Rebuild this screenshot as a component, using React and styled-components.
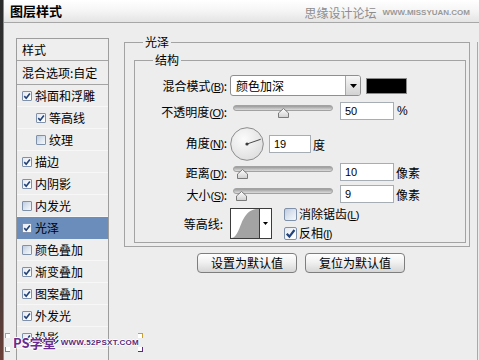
import React from "react";
import styled, { createGlobalStyle } from "styled-components";

const GlobalStyle = createGlobalStyle`
  html, body {
    margin: 0;
    padding: 0;
  }
  body {
    width: 479px;
    height: 360px;
    overflow: hidden;
    background: #ededed;
    font-family: "Noto Sans CJK SC", "Liberation Sans", sans-serif;
    font-size: 12px;
    color: #000;
  }
`;

const Screen = styled.div`
  position: relative;
  display: flex;
  width: 479px;
  height: 360px;
  overflow: hidden;
`;

const DesktopEdge = styled.div`
  flex: none;
  width: 4px;
  background: linear-gradient(
    to bottom,
    #2c2c2c 0%,
    #3a3a3a 55%,
    #4b3b37 82%,
    #6b3f37 100%
  );
  box-shadow: inset -1px 0 0 #8a8a8a;
`;

const Dialog = styled.div`
  flex: 1;
  display: flex;
  flex-direction: column;
  min-width: 0;
  background: #ededed;
`;

const TitleBar = styled.div`
  flex: none;
  display: flex;
  align-items: center;
  height: 22px;
  padding: 0 9px 0 6px;
  border-bottom: 1px solid #a7a7a7;
  background: linear-gradient(to bottom, #ffffff 0%, #f6f6f6 45%, #e4e4e4 100%);
`;

const Title = styled.span`
  font-size: 13px;
  font-weight: 700;
  line-height: 22px;
`;

const SiteMark = styled.div`
  margin-left: auto;
  display: flex;
  align-items: center;
  gap: 6px;
  padding-top: 3px;
  color: #8d8d8d;
`;

const SiteName = styled.span`
  font-size: 12px;
`;

const SiteUrl = styled.span`
  font-family: "Liberation Sans", sans-serif;
  font-size: 8px;
  font-weight: 700;
  letter-spacing: 0;
  color: #999;
`;

const Body = styled.div`
  flex: 1;
  display: flex;
  min-height: 0;
  padding: 12px 0 0 12px;
`;

const StylePanel = styled.div`
  flex: none;
  width: 93px;
  margin-top: 3px;
  box-sizing: border-box;
  border: 1px solid #9d9d9d;
  border-bottom: none;
  background: #eeeeee;
`;

const PanelHead = styled.div`
  height: ${(p) => p.$h}px;
  line-height: ${(p) => p.$h}px;
  padding-left: 5px;
  border-bottom: 1px solid #a4a4a4;
  white-space: nowrap;
`;

const StyleRow = styled.div`
  display: flex;
  align-items: center;
  gap: 3px;
  height: 21px;
  padding-left: ${(p) => (p.$indent ? 19 : 5)}px;
  border-bottom: 1px solid ${(p) => (p.$active ? "#6a8dbb" : "#f7f7f7")};
  background: ${(p) => (p.$active ? "#6a8dbb" : "transparent")};
  white-space: nowrap;
`;

const Box = styled.span`
  flex: none;
  display: inline-flex;
  align-items: center;
  justify-content: center;
  width: ${(p) => p.$size}px;
  height: ${(p) => p.$size}px;
  box-sizing: border-box;
  border: 1px solid #7f91aa;
  border-radius: ${(p) => (p.$size > 11 ? 2 : 1)}px;
  background: ${(p) =>
    p.$checked
      ? "linear-gradient(135deg, #e4e8ee 0%, #f7f8fa 60%, #ffffff 100%)"
      : "linear-gradient(135deg, #bfcde0 0%, #e2e9f2 60%, #f6f8fb 100%)"};
`;

function CheckBox({ checked, size = 10 }) {
  return (
    <Box $size={size} $checked={checked}>
      {checked && (
        <svg width={size - 2} height={size - 2} viewBox="0 0 10 10">
          <path
            d="M1.6 5.2 L4 7.8 L8.6 1.8"
            fill="none"
            stroke="#21427c"
            strokeWidth="2"
          />
        </svg>
      )}
    </Box>
  );
}

const RightArea = styled.div`
  flex: 1;
  display: flex;
  flex-direction: column;
  padding: 0 0 0 15px;
`;

const Rail = styled.div`
  flex: none;
  width: 1px;
  margin: 7px 0 0 0;
  border-left: 1px solid #a9a9a9;
`;

const Group = styled.fieldset`
  margin: 0;
  min-inline-size: 0;
  box-sizing: border-box;
  width: ${(p) => (p.$w ? `${p.$w}px` : "auto")};
  padding: ${(p) => p.$pad};
  border: 1px solid #a3a3a3;
`;

const GroupTitle = styled.legend`
  margin-left: ${(p) => p.$x}px;
  padding: 0 2px;
  font-size: 12px;
  line-height: 14px;
`;

const FormRow = styled.div`
  display: flex;
  align-items: center;
  height: ${(p) => p.$h}px;
  margin-top: ${(p) => p.$gap || 0}px;
`;

const FieldLabel = styled.div`
  flex: none;
  width: 92px;
  box-sizing: border-box;
  padding-right: ${(p) => p.$inset || 0}px;
  margin-bottom: ${(p) => p.$lift || 0}px;
  text-align: right;
  white-space: nowrap;
`;

const Key = styled.span`
  font-family: "Liberation Sans", sans-serif;
  font-size: 11px;
  letter-spacing: -0.5px;
  u {
    text-decoration-thickness: 1px;
    text-underline-offset: 1px;
  }
`;

const Select = styled.div`
  flex: none;
  display: flex;
  width: 131px;
  height: 21px;
  margin-left: 3px;
  box-sizing: border-box;
  border: 1px solid #8f8f8f;
  border-radius: 3px;
  background: #fff;
  overflow: hidden;
`;

const SelectText = styled.span`
  flex: 1;
  padding-left: 5px;
  line-height: 19px;
`;

const SelectArrow = styled.span`
  flex: none;
  display: flex;
  align-items: center;
  justify-content: center;
  width: 14px;
  border-left: 1px solid #a8a8a8;
  background: linear-gradient(to bottom, #f7f7f7 0%, #d2d2d2 100%);
`;

const Swatch = styled.div`
  flex: none;
  width: 41px;
  height: 16px;
  margin-left: 5px;
  box-sizing: border-box;
  border: 1px solid #8a8a8a;
  background: #000;
`;

const SliderWrap = styled.div`
  position: relative;
  flex: none;
  width: 100px;
  height: 16px;
  margin-left: 6px;
`;

const Track = styled.div`
  position: absolute;
  left: 0;
  right: 0;
  top: 2px;
  height: 4px;
  border-radius: 3px;
  border: 1px solid #a2a2a2;
  background: linear-gradient(to bottom, #9b9b9b 0%, #dcdcdc 100%);
`;

const Thumb = styled.svg`
  position: absolute;
  top: 5px;
`;

function Slider({ value, max }) {
  const left = Math.round((value / max) * 89);
  return (
    <SliderWrap>
      <Track />
      <Thumb width="11" height="10" viewBox="0 0 11 10" style={{ left }}>
        <defs>
          <linearGradient id="thumbFill" x1="0" y1="0" x2="0" y2="1">
            <stop offset="0" stopColor="#ffffff" />
            <stop offset="1" stopColor="#cfcfcf" />
          </linearGradient>
        </defs>
        <path
          d="M5.5 0.5 L10.5 5 L10.5 9.5 L0.5 9.5 L0.5 5 Z"
          fill="url(#thumbFill)"
          stroke="#7a7a7a"
        />
      </Thumb>
    </SliderWrap>
  );
}

const NumberBox = styled.div`
  flex: none;
  width: ${(p) => p.$w}px;
  height: 18px;
  margin-left: ${(p) => p.$gap}px;
  box-sizing: border-box;
  padding-left: 4px;
  border: 1px solid #a7adb4;
  background: #fff;
  font-family: "Liberation Sans", sans-serif;
  font-size: 11px;
  line-height: 16px;
`;

const Unit = styled.span`
  flex: none;
  margin-left: ${(p) => p.$gap}px;
  font-family: ${(p) =>
    p.$latin ? '"Liberation Sans", sans-serif' : "inherit"};
`;

const Dial = styled.svg`
  flex: none;
  margin-left: 3px;
`;

const ContourBox = styled.div`
  flex: none;
  display: flex;
  width: 42px;
  height: 31px;
  margin-left: 3px;
  box-sizing: border-box;
  border: 1px solid #3c3c3c;
  background: #fff;
`;

const ContourGraph = styled.svg`
  flex: none;
  border-right: 1px solid #3c3c3c;
`;

const ContourArrow = styled.span`
  flex: 1;
  display: flex;
  align-items: center;
  justify-content: center;
`;

const OptionStack = styled.div`
  display: flex;
  flex-direction: column;
  gap: 6px;
  margin-left: 12px;
`;

const Option = styled.label`
  display: flex;
  align-items: center;
  gap: 2px;
  height: 13px;
  line-height: 13px;
  white-space: nowrap;
`;

const ButtonRow = styled.div`
  display: flex;
  gap: 8px;
  margin-top: 6px;
  padding-left: 73px;
`;

const Button = styled.button`
  width: 100px;
  height: 20px;
  padding: 0;
  border: 1px solid #7e7e7e;
  border-radius: 4px;
  background: linear-gradient(to bottom, #ffffff 0%, #f1f1f1 45%, #d6d6d6 100%);
  font-family: inherit;
  font-size: 12px;
  line-height: 18px;
  color: #000;
`;

const Watermark = styled.div`
  position: absolute;
  left: 5px;
  top: 333px;
  display: flex;
  align-items: center;
  gap: 5px;
  width: 138px;
  height: 19px;
  padding-left: 8px;
  box-sizing: border-box;
`;

const Corner = styled.span`
  position: absolute;
  width: 4px;
  height: 4px;
  border: 1px solid ${(p) => p.$c};
  background: #fff;
  ${(p) => p.$pos}
`;

const MarkName = styled.span`
  font-size: 13px;
  font-weight: 700;
  line-height: 14px;
  color: #6a2c8c;
  text-shadow: 1px 0 #fff, -1px 0 #fff, 0 1px #fff, 0 -1px #fff;
`;

const MarkUrl = styled.span`
  font-family: "Liberation Sans", sans-serif;
  font-size: 8px;
  font-weight: 700;
  letter-spacing: 0.3px;
  color: #5a2a7c;
  text-shadow: 1px 0 #fff, -1px 0 #fff, 0 1px #fff, 0 -1px #fff;
`;

const styleItems = [
  { name: "斜面和浮雕", checked: true },
  { name: "等高线", checked: true, indent: true },
  { name: "纹理", checked: false, indent: true },
  { name: "描边", checked: true },
  { name: "内阴影", checked: true },
  { name: "内发光", checked: false },
  { name: "光泽", checked: true, active: true },
  { name: "颜色叠加", checked: false },
  { name: "渐变叠加", checked: true },
  { name: "图案叠加", checked: true },
  { name: "外发光", checked: true },
  { name: "投影", checked: true },
];

function Mnemonic({ k }) {
  return (
    <Key>
      (<u>{k}</u>)
    </Key>
  );
}

export default function App() {
  const angle = 19;
  const rad = (angle * Math.PI) / 180;

  return (
    <Screen>
      <GlobalStyle />
      <DesktopEdge />
      <Dialog>
        <TitleBar>
          <Title>图层样式</Title>
          <SiteMark>
            <SiteName>思缘设计论坛</SiteName>
            <SiteUrl>WWW.MISSYUAN.COM</SiteUrl>
          </SiteMark>
        </TitleBar>

        <Body>
          <StylePanel>
            <PanelHead $h={21}>样式</PanelHead>
            <PanelHead $h={23}>混合选项:自定</PanelHead>
            {styleItems.map((item) => (
              <StyleRow key={item.name} $indent={item.indent} $active={item.active}>
                <CheckBox checked={item.checked} />
                <span>{item.name}</span>
              </StyleRow>
            ))}
          </StylePanel>

          <RightArea>
            <Group $w={346} $pad="4px 3px 3px 9px">
              <GroupTitle $x={9}>光泽</GroupTitle>
              <Group $pad="8px 3px 3px 0">
                <GroupTitle $x={18}>结构</GroupTitle>

                <FormRow $h={21}>
                  <FieldLabel>
                    混合模式<Mnemonic k="B" />:
                  </FieldLabel>
                  <Select>
                    <SelectText>颜色加深</SelectText>
                    <SelectArrow>
                      <svg width="7" height="4" viewBox="0 0 7 4">
                        <path d="M0 0 H7 L3.5 4 Z" fill="#000" />
                      </svg>
                    </SelectArrow>
                  </Select>
                  <Swatch />
                </FormRow>

                <FormRow $h={18} $gap={6}>
                  <FieldLabel>
                    不透明度<Mnemonic k="O" />:
                  </FieldLabel>
                  <Slider value={50} max={100} />
                  <NumberBox $w={54} $gap={7}>50</NumberBox>
                  <Unit $gap={3} $latin>%</Unit>
                </FormRow>

                <FormRow $h={34} $gap={7}>
                  <FieldLabel $lift={4}>
                    角度<Mnemonic k="N" />:
                  </FieldLabel>
                  <Dial width="34" height="34" viewBox="0 0 34 34">
                    <defs>
                      <radialGradient id="dialFill" cx="0.4" cy="0.35" r="0.7">
                        <stop offset="0" stopColor="#fbfbfb" />
                        <stop offset="1" stopColor="#dedede" />
                      </radialGradient>
                    </defs>
                    <circle cx="17" cy="17" r="16.3" fill="url(#dialFill)" stroke="#8c8c8c" />
                    <line
                      x1="17"
                      y1="17"
                      x2={17 + 14.5 * Math.cos(rad)}
                      y2={17 - 14.5 * Math.sin(rad)}
                      stroke="#4a4a4a"
                      strokeWidth="1"
                    />
                    <circle cx="17" cy="17" r="1.6" fill="#3a3a3a" />
                  </Dial>
                  <NumberBox $w={42} $gap={5}>19</NumberBox>
                  <Unit $gap={2}>度</Unit>
                </FormRow>

                <FormRow $h={18} $gap={2}>
                  <FieldLabel>
                    距离<Mnemonic k="D" />:
                  </FieldLabel>
                  <Slider value={10} max={250} />
                  <NumberBox $w={54} $gap={7}>10</NumberBox>
                  <Unit $gap={2}>像素</Unit>
                </FormRow>

                <FormRow $h={18} $gap={4}>
                  <FieldLabel>
                    大小<Mnemonic k="S" />:
                  </FieldLabel>
                  <Slider value={9} max={250} />
                  <NumberBox $w={54} $gap={7}>9</NumberBox>
                  <Unit $gap={2}>像素</Unit>
                </FormRow>

                <FormRow $h={31} $gap={5}>
                  <FieldLabel $inset={4}>等高线:</FieldLabel>
                  <ContourBox>
                    <ContourGraph width="28" height="29" viewBox="0 0 28 29">
                      <path
                        d="M0 29 C7 29 9 15 13 9 C16 4 19 1 25 0 L28 0 L28 29 Z"
                        fill="#a3a3a3"
                      />
                    </ContourGraph>
                    <ContourArrow>
                      <svg width="5" height="3" viewBox="0 0 5 3">
                        <path d="M0 0 H5 L2.5 3 Z" fill="#000" />
                      </svg>
                    </ContourArrow>
                  </ContourBox>
                  <OptionStack>
                    <Option>
                      <CheckBox size={13} checked={false} />
                      <span>
                        消除锯齿<Mnemonic k="L" />
                      </span>
                    </Option>
                    <Option>
                      <CheckBox size={13} checked />
                      <span>
                        反相<Mnemonic k="I" />
                      </span>
                    </Option>
                  </OptionStack>
                </FormRow>
              </Group>
            </Group>

            <ButtonRow>
              <Button>设置为默认值</Button>
              <Button>复位为默认值</Button>
            </ButtonRow>
          </RightArea>

          <Rail />
        </Body>
      </Dialog>

      <Watermark>
        <Corner $c="#c9a030" $pos="left: 0; top: 0; border-right: none; border-bottom: none;" />
        <Corner $c="#6aa04a" $pos="left: 0; bottom: 0; border-right: none; border-top: none;" />
        <Corner $c="#c9a030" $pos="right: 0; top: 0; border-left: none; border-bottom: none;" />
        <Corner $c="#5a2a7c" $pos="right: 0; bottom: 0; border-left: none; border-top: none;" />
        <MarkName>PS学堂</MarkName>
        <MarkUrl>WWW.52PSXT.COM</MarkUrl>
      </Watermark>
    </Screen>
  );
}
